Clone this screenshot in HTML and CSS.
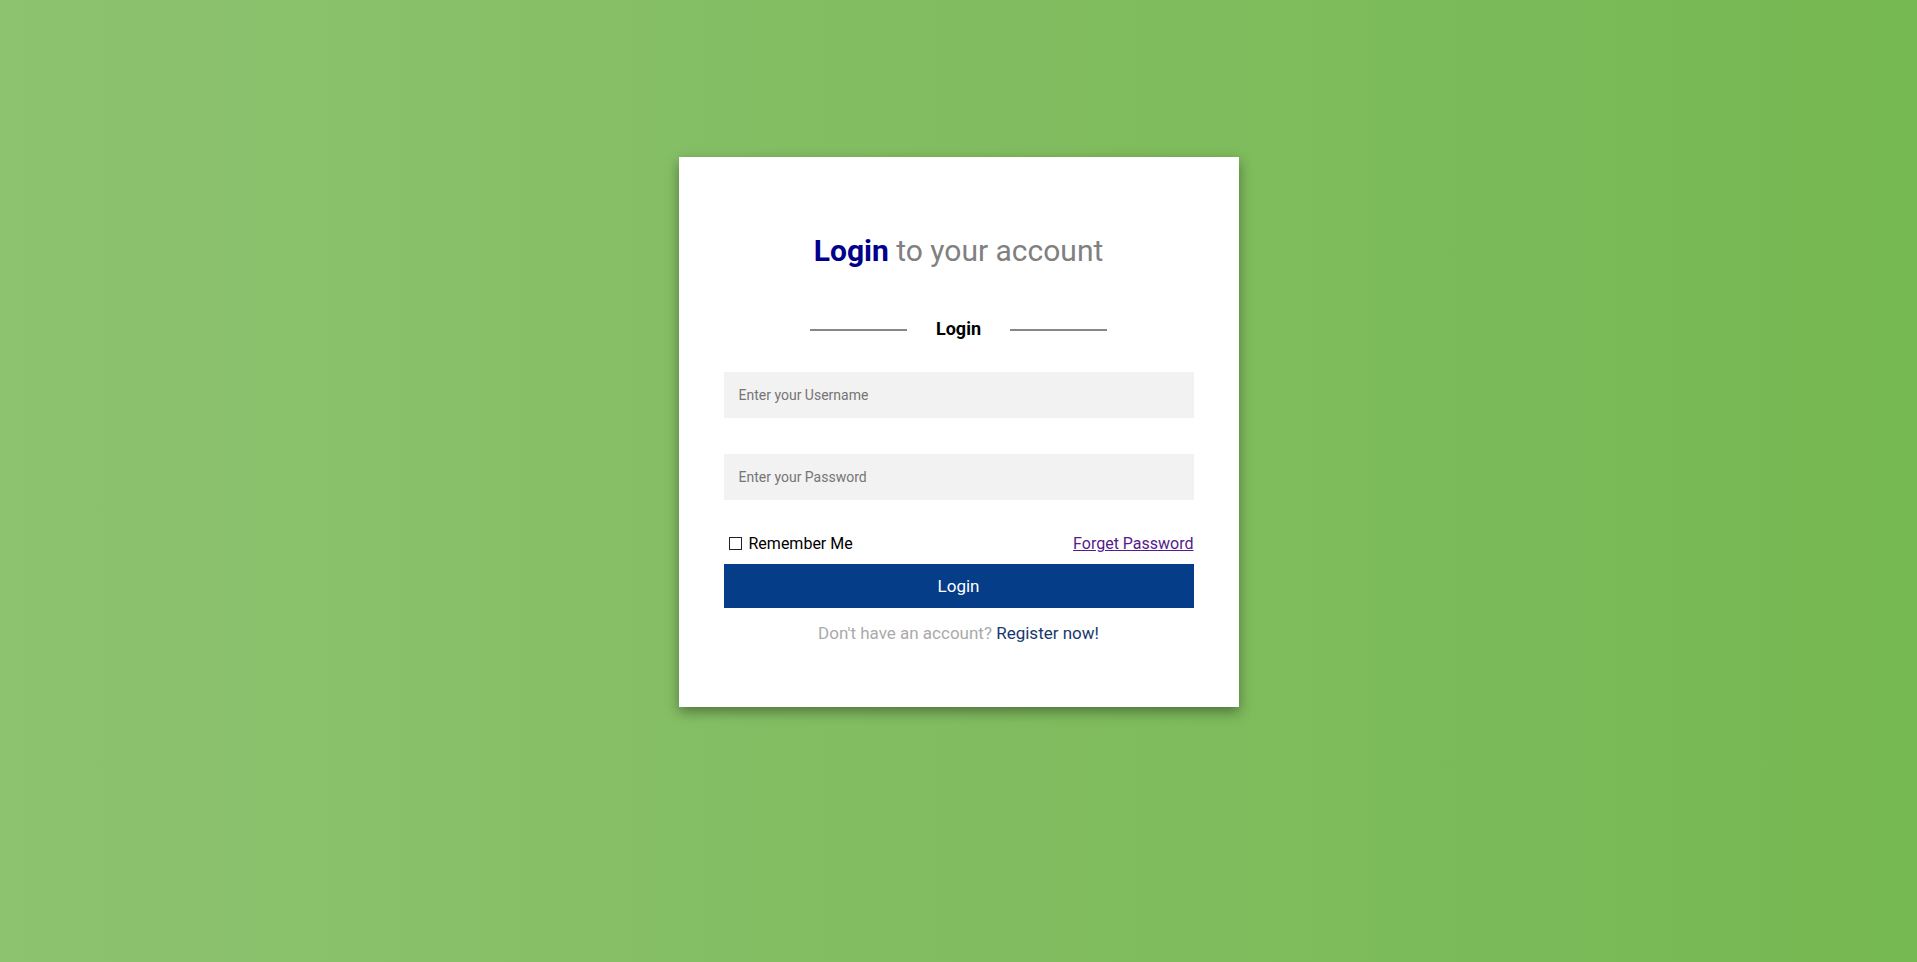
FILE: index.html
```html
<!DOCTYPE html>
<html lang="en">
<head>
<meta charset="utf-8">
<title>Login</title>
<link rel="stylesheet" href="styles.css">
</head>
<body>
<main class="card">
  <h2 class="title"><span class="title-strong">Login</span> to your account</h2>
  <div class="divider">
    <span class="divider-line"></span>
    <span class="divider-text">Login</span>
    <span class="divider-line"></span>
  </div>
  <form class="form">
    <input class="field" type="text" placeholder="Enter your Username">
    <input class="field field-second" type="password" placeholder="Enter your Password">
    <div class="options">
      <label class="remember"><input class="check" type="checkbox"><span>Remember Me</span></label>
      <a class="forgot" href="#">Forget Password</a>
    </div>
    <button class="submit" type="button">Login</button>
  </form>
  <p class="register">Don't have an account? <a class="register-link" href="#">Register now!</a></p>
</main>
</body>
</html>
```

FILE: styles.css
```css
html, body {
  margin: 0;
  padding: 0;
}
body {
  min-height: 962px;
  background: linear-gradient(to right, #8dc26f, #76b852);
  font-family: Roboto, "Liberation Sans", sans-serif;
  overflow: hidden;
}
.card {
  box-sizing: border-box;
  width: 560px;
  height: 550px;
  margin: 157px auto 0;
  padding: 76px 45px 64px;
  background: #fff;
  box-shadow: 0 5px 12px rgba(0, 0, 0, 0.38);
}
.title {
  margin: 0;
  font-size: 30px;
  line-height: 36px;
  font-weight: 400;
  text-align: center;
  color: #808080;
}
.title-strong {
  font-weight: 700;
  color: #00008b;
}
.divider {
  margin-top: 49px;
  display: flex;
  justify-content: center;
  align-items: center;
  gap: 29px;
  height: 22px;
}
.divider-line {
  display: block;
  width: 97px;
  height: 2px;
  background: #878787;
  margin-top: 1px;
}
.divider-text {
  font-size: 18px;
  line-height: 22px;
  font-weight: 700;
  color: #000;
}
.form {
  margin: 32px 0 0;
  display: flex;
  flex-direction: column;
}
.field {
  box-sizing: border-box;
  width: 100%;
  height: 46px;
  margin: 0;
  padding: 0 15px;
  border: none;
  outline: none;
  background: #f2f2f2;
  font-family: Roboto, "Liberation Sans", sans-serif;
  font-size: 14px;
  color: #333;
}
.field::placeholder {
  color: #757575;
}
.field-second {
  margin-top: 36px;
}
.options {
  margin-top: 34px;
  display: flex;
  justify-content: space-between;
  align-items: center;
  height: 19px;
  font-size: 16px;
  line-height: 19px;
}
.remember {
  display: flex;
  align-items: center;
  gap: 7px;
  color: #000;
  padding-left: 5px;
}
.check {
  appearance: none;
  -webkit-appearance: none;
  box-sizing: border-box;
  width: 13px;
  height: 13px;
  margin: 0 0 1px;
  border: 1px solid #222;
  border-radius: 0;
  background: #fff;
}
.forgot {
  color: #551a8b;
  text-decoration: underline;
}
.submit {
  margin-top: 11px;
  height: 44px;
  width: 100%;
  border: none;
  background: #053d89;
  color: #fff;
  font-family: Roboto, "Liberation Sans", sans-serif;
  font-size: 17px;
  padding: 0;
}
.register {
  margin: 15px 0 0;
  text-align: center;
  font-size: 17px;
  line-height: 20px;
  color: #aaaaaa;
}
.register-link {
  color: #19386c;
  text-decoration: none;
}
```
